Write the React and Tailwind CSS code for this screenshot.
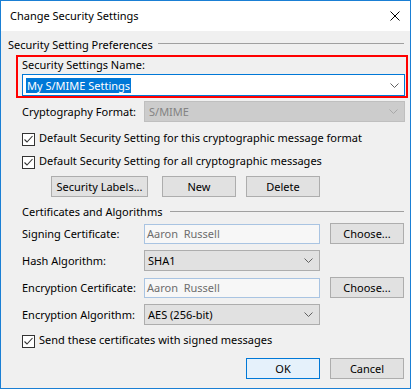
function Chevron({ color = "#606060" }) {
  return (
    <svg width="9" height="5" viewBox="0 0 9 5" className="shrink-0">
      <polyline points="0.5,0.5 4.5,4.5 8.5,0.5" fill="none" stroke={color} strokeWidth="1" />
    </svg>
  );
}

function Check({ label, className = "" }) {
  return (
    <div className={`flex items-center h-[13px] pl-[21px] ${className}`}>
      <div className="w-[13px] h-[13px] border border-[#333333] bg-white flex items-center justify-center shrink-0">
        <svg width="11" height="11" viewBox="0 0 11 11">
          <polyline points="1.5,5.5 4,8 9.5,2" fill="none" stroke="#333333" strokeWidth="1.1" />
        </svg>
      </div>
      <span className="ml-[4px] mb-[3px] whitespace-nowrap">{label}</span>
    </div>
  );
}

function Button({ children, className = "", primary = false }) {
  return (
    <div
      className={`h-[21px] w-[74px] flex items-center justify-center border ${
        primary ? "bg-[#e5f1fb] border-[#0078d7]" : "bg-[#e1e1e1] border-[#adadad]"
      } ${className}`}
    >
      {children}
    </div>
  );
}

function GroupHeader({ title, lineWidth, lineTop, className = "", textPad }) {
  return (
    <div className={`flex h-[16px] ${className}`}>
      <span className={`${textPad} whitespace-nowrap`}>{title}</span>
      <div className={`ml-auto mr-[6px] h-px bg-[#a0a0a0] ${lineWidth} ${lineTop}`} />
    </div>
  );
}

function Row({ label, children }) {
  return (
    <div className="flex items-center h-[27px] pl-[21px]">
      <span className="w-[122px] whitespace-nowrap">{label}</span>
      {children}
    </div>
  );
}

function ReadOnlyBox({ value }) {
  return (
    <div className="w-[176px] h-[20px] flex items-center border border-[#a9c4e2] bg-[#f7f7f7] pl-[2px] text-[#6d6d6d] whitespace-pre">
      {value}
    </div>
  );
}

function Combo({ value }) {
  return (
    <div className="w-[176px] h-[21px] flex items-center justify-between border border-[#adadad] bg-[#e1e1e1] pl-[3px] pr-[6px]">
      <span>{value}</span>
      <Chevron />
    </div>
  );
}

export default function App() {
  return (
    <div className="w-[411px] h-[389px] border border-[#1a7fd4] flex flex-col font-['Noto_Sans',sans-serif] text-[11px] leading-[16px] text-black">
      <div className="h-[30px] bg-white flex items-center justify-between pl-[9px] pr-[10px]">
        <span>Change Security Settings</span>
        <svg width="10" height="10" viewBox="0 0 10 10">
          <path d="M0.5 0.5 L9.5 9.5 M9.5 0.5 L0.5 9.5" stroke="#000" strokeWidth="1" />
        </svg>
      </div>

      <div className="flex-1 bg-[#f0f0f0] flex flex-col">
        <GroupHeader
          title="Security Setting Preferences"
          className="mt-[6px]"
          textPad="pl-[7px]"
          lineWidth="w-[246px]"
          lineTop="mt-[6px]"
        />

        <div className="mt-[2px] ml-[15px] mr-[2px] border-2 border-[#ff0000] flex flex-col">
          <div className="h-[17px] pl-[4px] leading-[15px]">Security Settings Name:</div>
          <div className="ml-[4px] mr-[1px] h-[22px] border border-[#0078d7] bg-white flex items-center justify-between pl-[3px] pr-[5px]">
            <span className="bg-[#0078d7] text-white px-[1px] leading-[15px]">My S/MIME Settings</span>
            <Chevron />
          </div>
        </div>

        <div className="mt-[3px] flex items-center h-[21px] pl-[21px]">
          <span className="w-[122px]">Cryptography Format:</span>
          <div className="w-[261px] h-[21px] border border-[#bfbfbf] bg-[#cccccc] flex items-center justify-between pl-[4px] pr-[6px] text-[#838383]">
            <span>S/MIME</span>
            <Chevron color="#a8a8a8" />
          </div>
        </div>

        <Check className="mt-[11px]" label="Default Security Setting for this cryptographic message format" />
        <Check className="mt-[10px]" label="Default Security Setting for all cryptographic messages" />

        <div className="mt-[7px] flex pl-[50px]">
          <Button className="w-[97px]">Security Labels...</Button>
          <Button className="ml-[14px]">New</Button>
          <Button className="ml-[10px]">Delete</Button>
        </div>

        <GroupHeader
          title="Certificates and Algorithms"
          className="mt-[7px]"
          textPad="pl-[21px]"
          lineWidth="w-[234px]"
          lineTop="mt-[7px]"
        />

        <div className="flex flex-col">
          <Row label="Signing Certificate:">
            <ReadOnlyBox value="Aaron  Russell" />
            <Button className="ml-[10px]">Choose...</Button>
          </Row>
          <Row label="Hash Algorithm:">
            <Combo value="SHA1" />
          </Row>
          <Row label="Encryption Certificate:">
            <ReadOnlyBox value="Aaron  Russell" />
            <Button className="ml-[10px]">Choose...</Button>
          </Row>
          <Row label="Encryption Algorithm:">
            <Combo value="AES (256-bit)" />
          </Row>
        </div>

        <Check className="mt-[7px]" label="Send these certificates with signed messages" />

        <div className="mt-[10px] flex justify-end pr-[6px]">
          <Button primary>OK</Button>
          <Button className="ml-[10px]">Cancel</Button>
        </div>
      </div>
    </div>
  );
}
